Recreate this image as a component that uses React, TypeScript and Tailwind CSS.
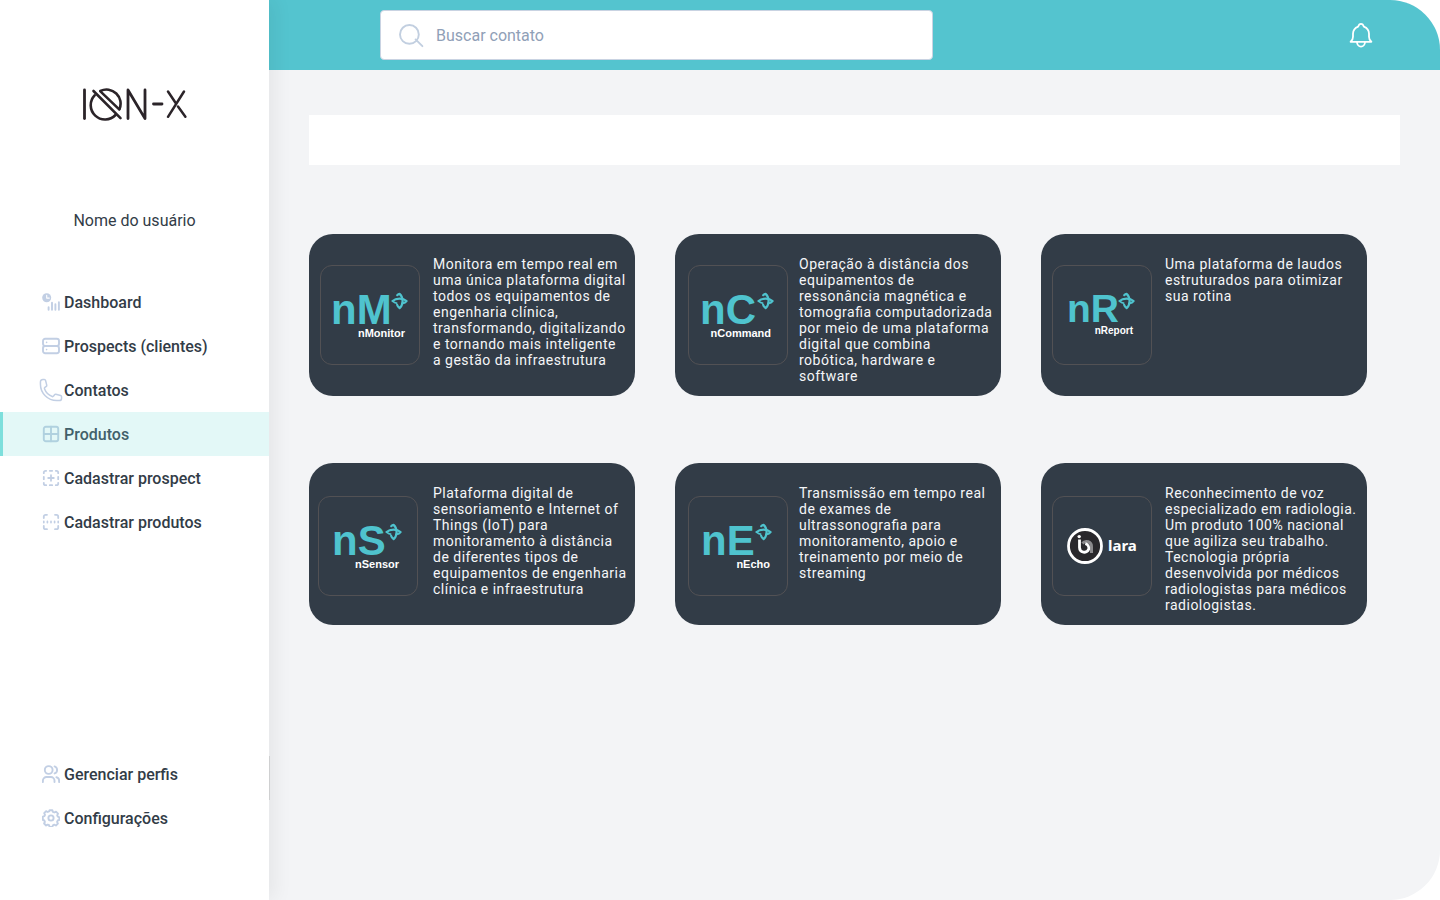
import type { ReactNode } from "react";

type NavItem = { label: string; icon: ReactNode; active?: boolean; edge?: boolean };

const svgProps = {
  width: 18,
  height: 18,
  viewBox: "0 0 18 18",
  fill: "none",
  stroke: "currentColor",
  strokeWidth: 1.9,
  strokeLinecap: "round" as const,
  strokeLinejoin: "round" as const,
  "aria-hidden": true,
};

const DashboardIcon = () => (
  <svg {...svgProps}>
    <circle cx="4.7" cy="4.7" r="4.5" fill="currentColor" stroke="none" />
    <path d="M4.7 2.4v2.7h2.6" stroke="#fff" strokeWidth="1.1" />
    <path d="M6.6 14.2v2.6M10 9.8v7M13.4 11.2v5.6M16.9 9.2v7.6" strokeWidth="1.9" />
  </svg>
);

const ServerIcon = () => (
  <svg {...svgProps}>
    <rect x="1" y="1.8" width="16" height="7.2" rx="2.2" />
    <rect x="1" y="9" width="16" height="7.2" rx="2.2" />
    <path d="M4.6 5.4h.01M4.6 12.6h.01" strokeWidth="1.6" />
  </svg>
);

const PhoneIcon = () => (
  <svg {...svgProps} width={26} height={26} viewBox="0 0 24 24" strokeWidth={1.4}>
    <path d="M2.25 6.75c0 8.284 6.716 15 15 15h2.25a2.25 2.25 0 0 0 2.25-2.25v-1.372c0-.516-.351-.966-.852-1.091l-4.423-1.106c-.44-.11-.902.055-1.173.417l-.97 1.293c-.282.376-.769.542-1.21.38a12.035 12.035 0 0 1-7.143-7.143c-.162-.441.004-.928.38-1.21l1.293-.97c.363-.271.527-.734.417-1.173L6.963 3.102a1.125 1.125 0 0 0-1.091-.852H4.5A2.25 2.25 0 0 0 2.25 4.5v2.25Z" />
  </svg>
);

const GridIcon = () => (
  <svg {...svgProps}>
    <rect x="1.8" y="1.8" width="14.4" height="14.4" rx="2" />
    <path d="M9 1.8v14.4M1.8 9h14.4" />
  </svg>
);

const AddBoxIcon = () => (
  <svg {...svgProps} strokeWidth={1.8}>
    <path d="M1.8 4.2V3.6a1.8 1.8 0 0 1 1.8-1.8h.6M13.8 1.8h.6a1.8 1.8 0 0 1 1.8 1.8v.6M16.2 13.8v.6a1.8 1.8 0 0 1-1.8 1.8h-.6M4.2 16.2h-.6a1.8 1.8 0 0 1-1.8-1.8v-.6" />
    <path d="M7.8 1.8h2.4M7.8 16.2h2.4M1.8 7.8v2.4M16.2 7.8v2.4M9 6.2v5.6M6.2 9h5.6" />
  </svg>
);

const ScanIcon = () => (
  <svg {...svgProps} strokeWidth={1.8}>
    <path d="M1.8 5V3.6a1.8 1.8 0 0 1 1.8-1.8H5M13 1.8h1.4a1.8 1.8 0 0 1 1.8 1.8V5M16.2 13v1.4a1.8 1.8 0 0 1-1.8 1.8H13M5 16.2H3.6a1.8 1.8 0 0 1-1.8-1.8V13" />
    <path d="M1.8 8.4v1.2M5.4 8.4v1.2M9 8.4v1.2M12.6 8.4v1.2M16.2 8.4v1.2" strokeWidth="1.7" />
  </svg>
);

const UsersIcon = () => (
  <svg {...svgProps}>
    <circle cx="6.7" cy="5" r="3.9" />
    <path d="M.9 17v-1.4a3.6 3.6 0 0 1 3.6-3.6h4.4a3.6 3.6 0 0 1 3.6 3.6V17M12.6 1.4a3.7 3.7 0 0 1 0 7M14.4 12.2a3.4 3.4 0 0 1 2.7 3.3V17" />
  </svg>
);

const GearIcon = () => (
  <svg {...svgProps}>
    <circle cx="9" cy="9" r="2.6" />
    <path d="M7.6 1.2h2.8l.5 1.7 1.4.6 1.7-.8 2 2-.8 1.6.6 1.4 1.6.6v2.6l-1.7.6-.6 1.4.8 1.7-2 1.9-1.7-.8-1.3.6-.5 1.6H7.6l-.5-1.7-1.4-.6-1.6.9-2-2 .8-1.7-.6-1.3-1.5-.6V7.7l1.6-.5.6-1.4-.8-1.6 1.9-2 1.6.8 1.4-.6z" />
  </svg>
);

const mainNav: NavItem[] = [
  { label: "Dashboard", icon: <DashboardIcon /> },
  { label: "Prospects (clientes)", icon: <ServerIcon /> },
  { label: "Contatos", icon: <PhoneIcon /> },
  { label: "Produtos", icon: <GridIcon />, active: true },
  { label: "Cadastrar prospect", icon: <AddBoxIcon /> },
  { label: "Cadastrar produtos", icon: <ScanIcon /> },
];

const footerNav: NavItem[] = [
  { label: "Gerenciar perfis", icon: <UsersIcon />, edge: true },
  { label: "Configurações", icon: <GearIcon /> },
];

const NavLink = ({ label, icon, active, edge }: NavItem) => (
  <li className="relative">
    <a
      href="#"
      aria-current={active ? "page" : undefined}
      className={
        active
          ? "flex h-11 items-center gap-1 border-l-[3px] border-[#7ddfdc] bg-[#e3f8f7] pl-[39px] font-medium text-[#41606a]"
          : "flex h-11 items-center gap-1 pl-[42px] font-medium text-[#323c47]"
      }
    >
      <span
        className={
          active
            ? "flex w-[18px] shrink-0 items-center justify-center text-[#b0d1df]"
            : "flex w-[18px] shrink-0 items-center justify-center text-[#c2cfe4]"
        }
      >
        <span className="shrink-0">{icon}</span>
      </span>
      <span className="pt-0.5">{label}</span>
    </a>
    {edge && <span className="absolute top-1 left-full h-full w-px bg-[#cfd0d1]" />}
  </li>
);

const BrandLogo = () => (
  <svg
    width="106"
    height="34"
    viewBox="0 0 106 34"
    fill="none"
    stroke="#2b2429"
    strokeWidth="2.8"
    strokeLinecap="round"
    role="img"
    aria-label="ION-X"
  >
    <path d="M2.5 3v28.6" />
    <path d="M12.6 8.4A14 14 0 0 0 33.5 28M18.4 4A14 14 0 0 1 37.4 22.2" strokeWidth="2.6" />
    <path d="M11.5 4l27 27.2M18.4 4.4l18.8 18" strokeWidth="2.6" />
    <path d="M46 31.6V3l17 28.6V3" strokeLinejoin="round" />
    <path d="M71.5 17h8.5" />
    <path d="M86 4.5l8 12M96 19.5l7.4 10.3M102 4.5l-16 25.3" strokeWidth="2.5" />
  </svg>
);

const Spark = ({ x, y }: { x: number; y: number }) => (
  <g transform={`translate(${x} ${y})`} stroke="#4fc3ce" fill="none" strokeLinecap="round" strokeLinejoin="round">
    <path d="M.6 8C4 4.9 11 4.9 14.6 8C13.4 9.4 12.2 10 10.9 10.3" strokeWidth="2.2" />
    <path d="M5.2 2.2C5.9 1.4 6.7.9 7.6.8C9.8 2.6 10.6 5.2 10.6 8C10.5 11 9.6 13.4 7.6 15.2C6.3 14.3 5.5 13.2 5.1 11.8" strokeWidth="2.2" />
    <path d="M.6 8C1.8 9.3 3.1 10 4.6 10.2" strokeWidth="1.8" />
  </g>
);

type Mark = {
  letters: string;
  name: string;
  start: number;
  baseline: number;
  end: number;
  nameY: number;
  sparkX: number;
  small?: boolean;
};

const ProductLogo = ({ letters, name, start, baseline, end, nameY, sparkX, small }: Mark) => (
  <svg width="98" height="98" viewBox="1 1 98 98" role="img" aria-label={name}>
    <g fontFamily="'Liberation Sans', Arial, sans-serif" fontWeight="700">
      <text x={start} y={baseline} fill="#4fc3ce" fontSize={small ? 39 : 42}>
        {letters}
      </text>
      <text x={end} y={nameY} textAnchor="end" fontSize={small ? 10 : 11} fill="#fff">
        {name}
      </text>
    </g>
    <Spark x={sparkX} y={28} />
  </svg>
);

const LaraLogo = () => (
  <svg width="98" height="98" viewBox="1 1 98 98" role="img" aria-label="lara">
    <circle cx="33" cy="50" r="16.5" fill="#29282c" stroke="#fff" strokeWidth="2.8" />
    <path d="M30.5 47.5a5 5 0 0 1 9 3.2V57" fill="none" stroke="#8b8a8d" strokeWidth="3" />
    <path d="M27.5 43.5V51.5a4.8 4.8 0 0 0 9.2 1.8a4.8 4.8 0 0 0-3.4-5.6" fill="none" stroke="#fff" strokeWidth="2.8" />
    <circle cx="27.2" cy="40.6" r="1.7" fill="#fff" />
    <text x="56" y="55" fontFamily="'Noto Sans', sans-serif" fontWeight="700" fontSize="15" fill="#fff">
      lara
    </text>
  </svg>
);

type Product = { id: string; text: string; logo: ReactNode; pad: string };

const products: Product[] = [
  {
    id: "nMonitor",
    pad: "pl-[11px] pt-[31px]",
    text: "Monitora em tempo real em uma única plataforma digital todos os equipamentos de engenharia clínica, transformando, digitalizando e tornando mais inteligente a gestão da infraestrutura",
    logo: <ProductLogo letters="nM" name="nMonitor" start={11} baseline={59} end={85} nameY={72} sparkX={72} />,
  },
  {
    id: "nCommand",
    pad: "pl-[13px] pt-[31px]",
    text: "Operação à distância dos equipamentos de ressonância magnética e tomografia computadorizada por meio de uma plataforma digital que combina robótica, hardware e software",
    logo: <ProductLogo letters="nC" name="nCommand" start={12} baseline={59} end={83} nameY={72} sparkX={70} />,
  },
  {
    id: "nReport",
    pad: "pl-[11px] pt-[31px]",
    text: "Uma plataforma de laudos estruturados para otimizar sua rotina",
    logo: <ProductLogo small letters="nR" name="nReport" start={15} baseline={57} end={81} nameY={69} sparkX={67} />,
  },
  {
    id: "nSensor",
    pad: "pl-[9px] pt-[33px]",
    text: "Plataforma digital de sensoriamento e Internet of Things (IoT) para monitoramento à distância de diferentes tipos de equipamentos de engenharia clínica e infraestrutura",
    logo: <ProductLogo letters="nS" name="nSensor" start={14} baseline={59} end={81} nameY={72} sparkX={68} />,
  },
  {
    id: "nEcho",
    pad: "pl-[13px] pt-[33px]",
    text: "Transmissão em tempo real de exames de ultrassonografia para monitoramento, apoio e treinamento por meio de streaming",
    logo: <ProductLogo letters="nE" name="nEcho" start={13} baseline={59} end={82} nameY={72} sparkX={68} />,
  },
  {
    id: "lara",
    pad: "pl-[11px] pt-[33px]",
    text: "Reconhecimento de voz especializado em radiologia. Um produto 100% nacional que agiliza seu trabalho. Tecnologia própria desenvolvida por médicos radiologistas para médicos radiologistas.",
    logo: <LaraLogo />,
  },
];

const ProductCard = ({ text, logo, pad }: Product) => (
  <article className="grid min-h-[162px] grid-cols-[124px_1fr] rounded-3xl bg-[#323c47]">
    <div className={pad}>
      <div className="size-[100px] overflow-hidden rounded-xl border border-[#525154]">{logo}</div>
    </div>
    <p className="pt-[22px] pr-2 pb-3 text-sm leading-4 tracking-[0.5px] text-[#f5f6f8] [font-feature-settings:'liga']">
      {text}
    </p>
  </article>
);

export default function App() {
  return (
    <div className="flex min-h-screen bg-white font-[Roboto,sans-serif] text-base text-[#323c47]">
      <aside className="relative z-10 flex w-[269px] shrink-0 flex-col bg-white shadow-[6px_0_18px_rgba(0,0,0,0.06)]">
        <div className="flex justify-center pt-[87px]">
          <BrandLogo />
        </div>
        <p className="mt-[88px] text-center leading-6">Nome do usuário</p>
        <nav aria-label="Principal" className="mt-[47px] flex grow flex-col justify-between pb-[60px]">
          <ul>
            {mainNav.map((item) => (
              <NavLink key={item.label} {...item} />
            ))}
          </ul>
          <ul>
            {footerNav.map((item) => (
              <NavLink key={item.label} {...item} />
            ))}
          </ul>
        </nav>
      </aside>

      <div className="min-w-0 grow overflow-hidden rounded-r-[50px] bg-[#f3f4f6]">
        <header className="flex h-[70px] items-center justify-between bg-[#54c4cf] pr-[67px] pl-[111px]">
          <label className="flex h-[50px] w-[553px] items-center gap-3 rounded border border-[#c9d3e2] bg-white pl-[17px]">
            <svg width="26" height="26" viewBox="0 0 26 26" fill="none" stroke="#c2cfe0" strokeWidth="1.9" strokeLinecap="round" aria-hidden>
              <circle cx="11.4" cy="12.4" r="9.4" />
              <path d="M17.6 17.4l6.8 6.8" />
            </svg>
            <input
              type="search"
              aria-label="Buscar contato"
              placeholder="Buscar contato"
              className="min-w-0 grow bg-transparent pt-0.5 text-base outline-none placeholder:text-[#90a0b7]"
            />
          </label>
          <button type="button" aria-label="Notificações">
            <svg width="24" height="26" viewBox="0 0 24 26" fill="none" stroke="#fff" strokeWidth="1.8" strokeLinecap="round" strokeLinejoin="round" aria-hidden>
              <path d="M1.6 19.8c1.8-1.3 2.4-2.8 2.4-5v-3c0-3.5 2.2-6 5.2-7.2.5-1.7 1.5-2.7 2.8-2.7s2.3 1 2.8 2.7c3 1.2 5.2 3.7 5.2 7.2v3c0 2.2.6 3.7 2.4 5z" />
              <path d="M8 20a4 4.6 0 0 0 8 0" />
            </svg>
          </button>
        </header>
        <main className="pt-[45px] pb-10">
          <div className="mx-10 h-[50px] bg-white" />
          <section
            aria-label="Produtos"
            className="mt-[69px] mr-[73px] ml-10 grid grid-cols-3 gap-x-10 gap-y-[67px]"
          >
            {products.map((product) => (
              <ProductCard key={product.id} {...product} />
            ))}
          </section>
        </main>
      </div>
    </div>
  );
}
